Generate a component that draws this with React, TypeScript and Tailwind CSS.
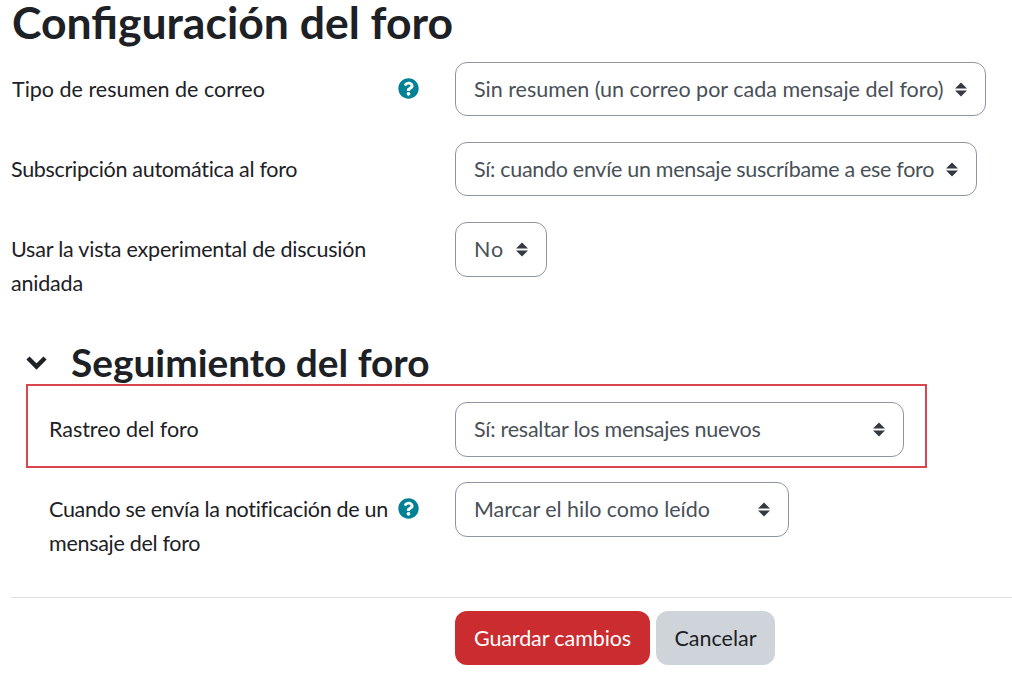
const HelpIcon = () => (
    <svg viewBox="0 0 512 512" className="w-[21px] h-[21px]" fill="#008196">
        <path d="M504 256c0 137-111 248-248 248S8 393 8 256 119 8 256 8s248 111 248 248zM262.700 90c-54.500 0-89.300 23-116.600 63.800-3.500 5.300-2.400 12.400 2.700 16.300l34.700 26.300c5.200 3.900 12.600 3 16.700-2.100 17.900-22.700 30.100-35.800 57.300-35.800 20.400 0 45.700 13.100 45.700 33 0 15-12.400 22.700-32.600 34-23.600 13.200-54.800 29.700-54.800 70.900V302c0 6.600 5.400 12 12 12h56c6.600 0 12-5.400 12-12v-1.300c0-28.600 83.500-29.800 83.500-107.200C379.300 135.200 318.800 90 262.700 90zM256 339c-25.500 0-46.200 20.700-46.200 46.200 0 25.500 20.700 46.200 46.200 46.200s46.200-20.700 46.200-46.200c0-25.500-20.700-46.200-46.200-46.200z" />
    </svg>
);

const SortIcon = () => (
    <svg viewBox="0 0 12 15" className="w-3 h-[15px] shrink-0" fill="#343a40">
        <path d="M6 0.500 L12 6.500 H0 Z" />
        <path d="M6 14.500 L12 8.500 H0 Z" />
    </svg>
);

const Select = ({ text, className }: { text: string, className: string }) => (
    <div className={`${className} shrink-0 flex items-center pl-[18px] pr-[18px] border border-[#8f959e] rounded-[12px] text-[21.500px] text-[#495057]`}>
        <span className="flex-1 whitespace-nowrap">{text}</span>
        <SortIcon />
    </div>
);

const Row = ({ label, help, children, labelClass }: { label: React.ReactNode, help?: boolean, children: React.ReactNode, labelClass: string }) => (
    <div className="flex items-start">
        <div className={`${labelClass} shrink-0 flex items-start`}>
            <div className="flex-1 min-w-0 whitespace-nowrap text-[21.500px] leading-[34px] text-[#1d2125]">{label}</div>
            {help ? <div className="pt-[6px] mr-[36px]"><HelpIcon /></div> : null}
        </div>
        {children}
    </div>
);

export default function App() {
    return (
        <div className="w-[1012px] h-[682px] overflow-hidden bg-white font-['Lato',sans-serif]">
            <h1 className="pl-[12px] text-[44.500px] leading-[44px] font-bold text-[#1d2125]">Configuración del foro</h1>

            <div className="pl-[11px] mt-[18px] flex flex-col gap-[26px]">
                <Row label={<span className="pl-px">Tipo de resumen de correo</span>} help labelClass="w-[444px] pt-[10px]">
                    <Select text="Sin resumen (un correo por cada mensaje del foro)" className="w-[531px] h-[54px]" />
                </Row>
                <Row label={<span className="tracking-[-0.3px]">Subscripción automática al foro</span>} labelClass="w-[444px] pt-[10px]">
                    <Select text="Sí: cuando envíe un mensaje suscríbame a ese foro" className="w-[522px] h-[54px] tracking-[-0.31px]" />
                </Row>
                <Row label={<span className="tracking-[-0.2px]">Usar la vista experimental de discusión<br />anidada</span>} labelClass="w-[444px] pt-[10px]">
                    <Select text="No" className="w-[92px] h-[55px] tracking-[0.8px]" />
                </Row>
            </div>

            <div className="flex items-center pl-[26px] mt-[38px]">
                <svg viewBox="0 0 21 15" className="w-[21px] h-[15px]" fill="none" stroke="#1d2125" strokeWidth="4.500">
                    <path d="M2 3 L10.500 11.500 L19 3" />
                </svg>
                <h2 className="ml-[24px] text-[38.800px] leading-[48px] font-bold text-[#1d2125]">Seguimiento del foro</h2>
            </div>

            <div className="ml-[26px] w-[901px] h-[84px] mt-[-2px] box-content border-0 outline-none">
                <div className="h-[84px] border-2 border-[#d9464d] flex items-start pt-[16px] pl-[21px]">
                    <Row label={<span className="tracking-[-0.05px]">Rastreo del foro</span>} labelClass="w-[406px] pt-[10px]">
                        <Select text="Sí: resaltar los mensajes nuevos" className="w-[449px] h-[55px] tracking-[-0.25px]" />
                    </Row>
                </div>
            </div>

            <div className="pl-[49px] mt-[14px]">
                <Row label={<span className="tracking-[-0.3px]">Cuando se envía la notificación de un<br />mensaje del foro</span>} help labelClass="w-[406px] pt-[10px]">
                    <Select text="Marcar el hilo como leído" className="w-[334px] h-[55px] tracking-[-0.04px]" />
                </Row>
            </div>

            <div className="ml-[11px] mt-[37px] border-t border-[#dee2e6]" />

            <div className="flex gap-[6px] pl-[455px] mt-[13px] text-[21.500px]">
                <div className="w-[195px] h-[54px] rounded-[12px] bg-[#ca2c30] flex items-center justify-center text-white tracking-[-0.1px]">Guardar cambios</div>
                <div className="w-[119px] h-[54px] rounded-[12px] bg-[#ced4da] flex items-center justify-center text-[#1d2125]">Cancelar</div>
            </div>
        </div>
    );
}
